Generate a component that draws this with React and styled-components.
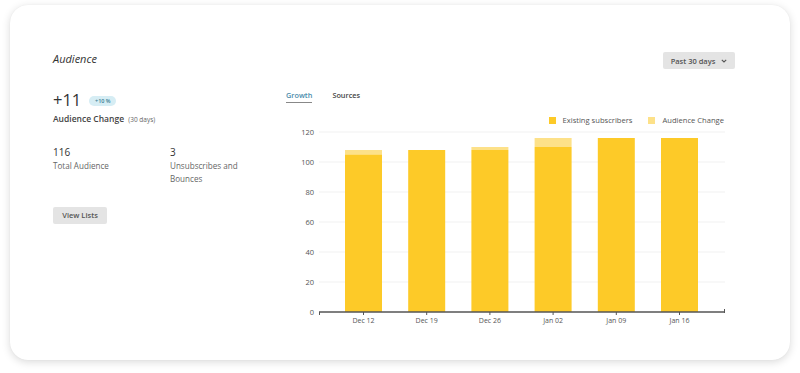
import React from "react";
import styled, { createGlobalStyle } from "styled-components";

const Global = createGlobalStyle`
  html, body { margin: 0; padding: 0; background: #ffffff; }
  body { font-family: "Open Sans", "Liberation Sans", sans-serif; color: #333; }
  * { box-sizing: border-box; }
`;

const Page = styled.div`
  width: 800px;
  height: 373px;
  padding: 5px 10px 0 10px;
  overflow: hidden;
`;

const Card = styled.section`
  width: 780px;
  height: 355px;
  background: #fff;
  border-radius: 18px;
  box-shadow: 0 2px 8px rgba(0, 0, 0, 0.15), 0 0 1px rgba(0, 0, 0, 0.08);
  padding: 47px 55px 0 43px;
`;

const Header = styled.header`
  display: flex;
  align-items: center;
  justify-content: space-between;
  height: 17px;
`;

const Title = styled.h2`
  margin: 0;
  font-size: 11px;
  font-style: italic;
  font-weight: 400;
  color: #333;
  line-height: 14px;
  position: relative;
  top: -2px;
`;

const GreyButton = styled.button`
  display: inline-flex;
  align-items: center;
  justify-content: center;
  gap: 6px;
  height: 17px;
  width: ${(p) => p.$w}px;
  border: none;
  border-radius: 2px;
  background: #e4e4e4;
  color: #555;
  font-family: "Open Sans", "Liberation Sans", sans-serif;
  font-size: 7.5px;
  font-weight: 600;
  padding: 0;
`;

const Body = styled.div`
  display: flex;
  margin-top: 21px;
`;

const Summary = styled.div`
  width: 233px;
  display: flex;
  flex-direction: column;
`;

const BigRow = styled.div`
  display: flex;
  align-items: center;
  gap: 8px;
  height: 20px;
`;

const BigNumber = styled.span`
  font-size: 16.5px;
  line-height: 20px;
  color: #333;
`;

const Badge = styled.span`
  display: inline-flex;
  align-items: center;
  justify-content: center;
  height: 10px;
  width: 27px;
  border-radius: 5px;
  background: #d6edf4;
  color: #3b7d93;
  font-size: 5.5px;
  font-weight: 600;
  margin-top: 2px;
`;

const ChangeLabel = styled.div`
  margin-top: 3px;
  font-size: 8.5px;
  line-height: 12px;
  font-weight: 600;
  color: #444;
  span {
    font-size: 6.5px;
    font-weight: 400;
    color: #666;
    margin-left: 2px;
  }
`;

const Stats = styled.div`
  display: grid;
  grid-template-columns: 117px 116px;
  margin-top: 20px;
`;

const Stat = styled.div`
  display: flex;
  flex-direction: column;
`;

const StatValue = styled.div`
  font-size: 10px;
  line-height: 13px;
  color: #333;
`;

const StatLabel = styled.div`
  font-size: 8.1px;
  line-height: 13px;
  color: #666;
  width: 82px;
`;

const ButtonRow = styled.div`
  margin-top: 16px;
`;

const ChartPanel = styled.div`
  flex: 1;
  display: flex;
  flex-direction: column;
`;

const Tabs = styled.nav`
  display: flex;
  gap: 20px;
`;

const Tab = styled.span`
  font-size: 7.3px;
  font-weight: 600;
  line-height: 10px;
  padding-bottom: 2px;
  color: ${(p) => (p.$active ? "#4a8cab" : "#444")};
  border-bottom: 1px solid ${(p) => (p.$active ? "#888" : "transparent")};
`;

const Legend = styled.div`
  display: flex;
  justify-content: flex-end;
  gap: 16px;
  margin-top: 12px;
  padding-right: 11px;
  height: 10px;
`;

const LegendItem = styled.span`
  display: inline-flex;
  align-items: center;
  gap: 7px;
  font-size: 7.6px;
  line-height: 10px;
  color: #555;
`;

const Swatch = styled.i`
  display: inline-block;
  width: 7px;
  height: 7px;
  background: ${(p) => p.$c};
`;

const ChartSvg = styled.svg`
  display: block;
  margin-top: 2px;
`;

const DARK = "#fdca28";
const LIGHT = "#fde189";

const data = [
  { label: "Dec 12", base: 105, change: 3 },
  { label: "Dec 19", base: 108, change: 0 },
  { label: "Dec 26", base: 108, change: 2 },
  { label: "Jan 02", base: 110, change: 6 },
  { label: "Jan 09", base: 116, change: 0 },
  { label: "Jan 16", base: 116, change: 0 },
];

function Chart() {
  const W = 449;
  const H = 200;
  const x0 = 33;
  const x1 = 439;
  const yZero = 185;
  const unit = 1.5;
  const period = 63.2;
  const firstCenter = 77.5;
  const bw = 37;
  const ticks = [0, 20, 40, 60, 80, 100, 120];
  return (
    <ChartSvg width={W} height={H} viewBox={`0 0 ${W} ${H}`}>
      {ticks.map((t) => {
        const y = yZero - t * unit;
        return (
          <g key={t}>
            {t > 0 && <line x1={x0} x2={x1} y1={y} y2={y} stroke="#f1f1f1" strokeWidth="1" />}
            <text x={28} y={y + 3} textAnchor="end" fontSize="7.5" fill="#555" fontFamily="Open Sans, Liberation Sans, sans-serif">
              {t}
            </text>
          </g>
        );
      })}
      {data.map((d, i) => {
        const cx = firstCenter + i * period;
        const yBase = yZero - d.base * unit;
        const yTop = yZero - (d.base + d.change) * unit;
        return (
          <g key={d.label}>
            {d.change > 0 && <rect x={cx - bw / 2} y={yTop} width={bw} height={yBase - yTop} fill={LIGHT} />}
            <rect x={cx - bw / 2} y={yBase} width={bw} height={yZero - yBase} fill={DARK} />
            <line x1={cx} x2={cx} y1={yZero} y2={yZero + 3} stroke="#555" strokeWidth="1" />
            <text x={cx} y={yZero + 11} textAnchor="middle" fontSize="7" fill="#555" fontFamily="Open Sans, Liberation Sans, sans-serif">
              {d.label}
            </text>
          </g>
        );
      })}
      <line x1={x0} x2={x1} y1={yZero} y2={yZero} stroke="#555" strokeWidth="1.3" />
      <line x1={x0 + 0.5} x2={x0 + 0.5} y1={yZero} y2={yZero + 3} stroke="#555" strokeWidth="1" />
      <line x1={x1 - 0.5} x2={x1 - 0.5} y1={yZero - 3} y2={yZero + 1} stroke="#555" strokeWidth="1" />
    </ChartSvg>
  );
}

const Chevron = () => (
  <svg width="6" height="4" viewBox="0 0 6 4">
    <polyline points="0.8,0.8 3,3 5.2,0.8" fill="none" stroke="#555" strokeWidth="1.1" />
  </svg>
);

export default function App() {
  return (
    <Page>
      <Global />
      <Card>
        <Header>
          <Title>Audience</Title>
          <GreyButton $w={72}>
            Past 30 days <Chevron />
          </GreyButton>
        </Header>
        <Body>
          <Summary>
            <BigRow>
              <BigNumber>+11</BigNumber>
              <Badge>+10 %</Badge>
            </BigRow>
            <ChangeLabel>
              Audience Change <span>(30 days)</span>
            </ChangeLabel>
            <Stats>
              <Stat>
                <StatValue>116</StatValue>
                <StatLabel>Total Audience</StatLabel>
              </Stat>
              <Stat>
                <StatValue>3</StatValue>
                <StatLabel>Unsubscribes and Bounces</StatLabel>
              </Stat>
            </Stats>
            <ButtonRow>
              <GreyButton $w={54}>View Lists</GreyButton>
            </ButtonRow>
          </Summary>
          <ChartPanel>
            <Tabs>
              <Tab $active>Growth</Tab>
              <Tab>Sources</Tab>
            </Tabs>
            <Legend>
              <LegendItem>
                <Swatch $c={DARK} />
                Existing subscribers
              </LegendItem>
              <LegendItem>
                <Swatch $c={LIGHT} />
                Audience Change
              </LegendItem>
            </Legend>
            <Chart />
          </ChartPanel>
        </Body>
      </Card>
    </Page>
  );
}
